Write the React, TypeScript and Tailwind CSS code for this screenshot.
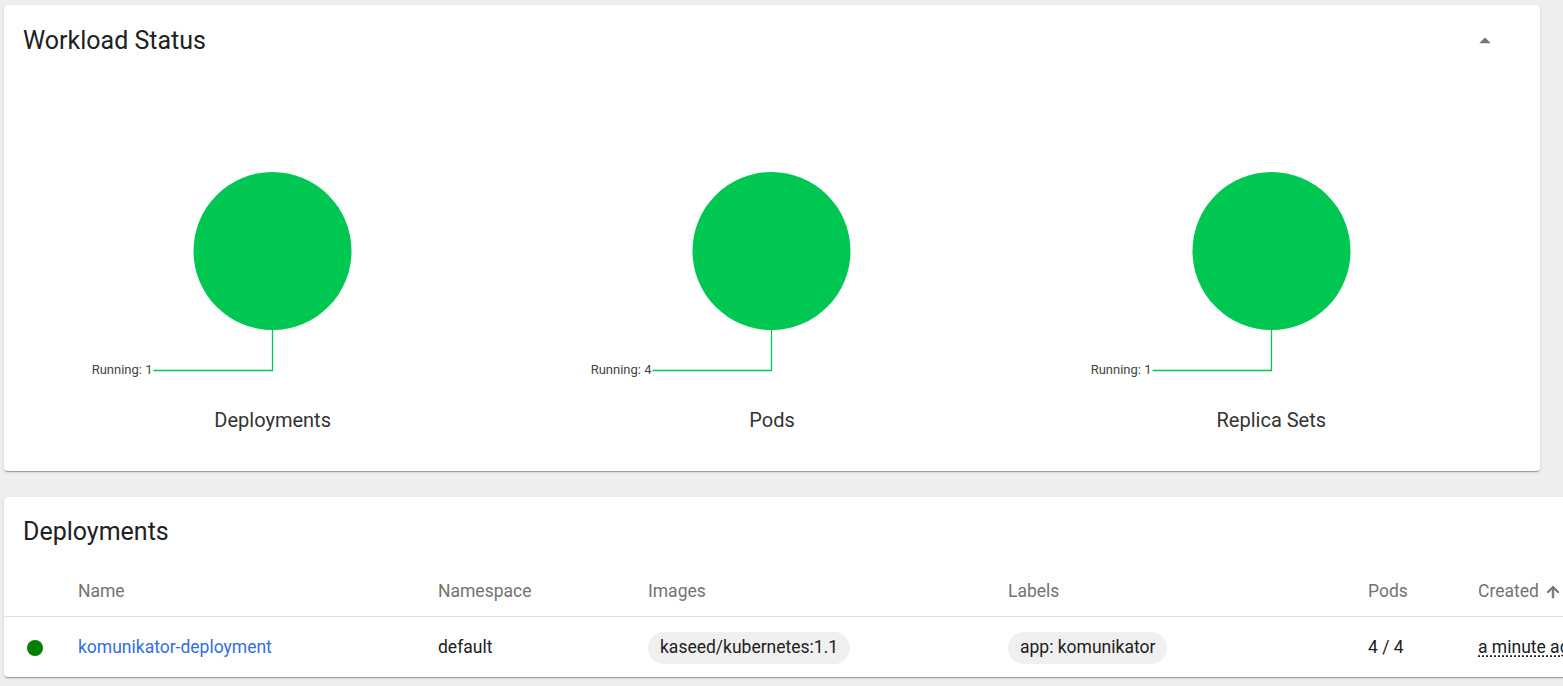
import React from 'react'

const cardShadow =
  'shadow-[0_2px_1px_-1px_rgba(0,0,0,0.2),0_1px_1px_0_rgba(0,0,0,0.14),0_1px_3px_0_rgba(0,0,0,0.12)]'

const cols = 'grid-cols-[74px_360px_210px_360px_360px_110px_1fr]'

function DropUp() {
  return (
    <svg width="28" height="28" viewBox="0 0 24 24" className="fill-[#757575]">
      <path d="M7 14l5-5 5 5z" />
    </svg>
  )
}

function StatusChart({ label, running }: { label: string; running: number }) {
  return (
    <div className="flex flex-col items-center">
      <svg width="499" height="230" viewBox="0 0 499 230">
        <circle cx="249.5" cy="91" r="79" fill="#00c752" />
        <path d="M249.5 170 V210.5 H130.5" fill="none" stroke="#00c752" strokeWidth="1.3" />
        <text
          x="129.5"
          y="211"
          textAnchor="end"
          dominantBaseline="middle"
          fontSize="13"
          fill="#444"
          fontFamily="Roboto, sans-serif"
        >
          Running: {running}
        </text>
      </svg>
      <div className="mt-[18px] text-[20px] leading-6 text-[#333]">{label}</div>
    </div>
  )
}

export default function App() {
  const charts = [
    { label: 'Deployments', running: 1 },
    { label: 'Pods', running: 4 },
    { label: 'Replica Sets', running: 1 },
  ]

  return (
    <div className="min-h-screen overflow-hidden bg-[#edeef0] font-['Roboto',sans-serif]">
      <div className="flex flex-col gap-[26px] pl-1 pt-[5px]">
        {/* Workload status */}
        <div className={`w-[1536px] shrink-0 rounded bg-white ${cardShadow}`}>
          <div className="flex h-[72px] items-center justify-between pl-[19px] pr-[41px]">
            <h2 className="text-[25px] font-normal text-[#212121]">Workload Status</h2>
            <DropUp />
          </div>
          <div className="grid grid-cols-3 px-[19px] pb-[39px] pt-[83px]">
            {charts.map((c) => (
              <StatusChart key={c.label} label={c.label} running={c.running} />
            ))}
          </div>
        </div>

        {/* Deployments */}
        <div className={`w-[1622px] shrink-0 rounded bg-white ${cardShadow}`}>
          <div className="flex h-[70px] items-center justify-between pl-[19px] pr-[41px]">
            <h2 className="text-[25px] font-normal text-[#212121]">Deployments</h2>
            <DropUp />
          </div>
          <div className={`grid h-[50px] ${cols} items-center border-b border-[#e0e0e0] text-[17.5px] text-[#737373]`}>
            <div />
            <div>Name</div>
            <div>Namespace</div>
            <div>Images</div>
            <div>Labels</div>
            <div>Pods</div>
            <div className="flex items-center gap-[5px] whitespace-nowrap">
              Created
              <svg width="18" height="18" viewBox="0 0 24 24" className="fill-[#757575]">
                <path
                  d="M4 12l1.41 1.41L11 7.83V20h2V7.83l5.58 5.59L20 12l-8-8-8 8z"
                  stroke="#757575"
                  strokeWidth="1.2"
                />
              </svg>
            </div>
          </div>
          <div className={`grid h-[60px] ${cols} items-center pt-px text-[17.5px] text-[#212121]`}>
            <div className="flex pl-[23px]">
              <span className="h-4 w-4 rounded-full bg-[#008000]" />
            </div>
            <a href="#" className="text-[#326de6]">
              komunikator-deployment
            </a>
            <div>default</div>
            <div>
              <span className="inline-flex h-8 items-center rounded-full bg-[#f0f0f0] px-3">
                kaseed/kubernetes:1.1
              </span>
            </div>
            <div>
              <span className="inline-flex h-8 items-center rounded-full bg-[#f0f0f0] px-3">
                app: komunikator
              </span>
            </div>
            <div>4 / 4</div>
            <div className="whitespace-nowrap">
              <span className="underline decoration-dotted underline-offset-2">a minute ago</span>
            </div>
          </div>
        </div>
      </div>
    </div>
  )
}
